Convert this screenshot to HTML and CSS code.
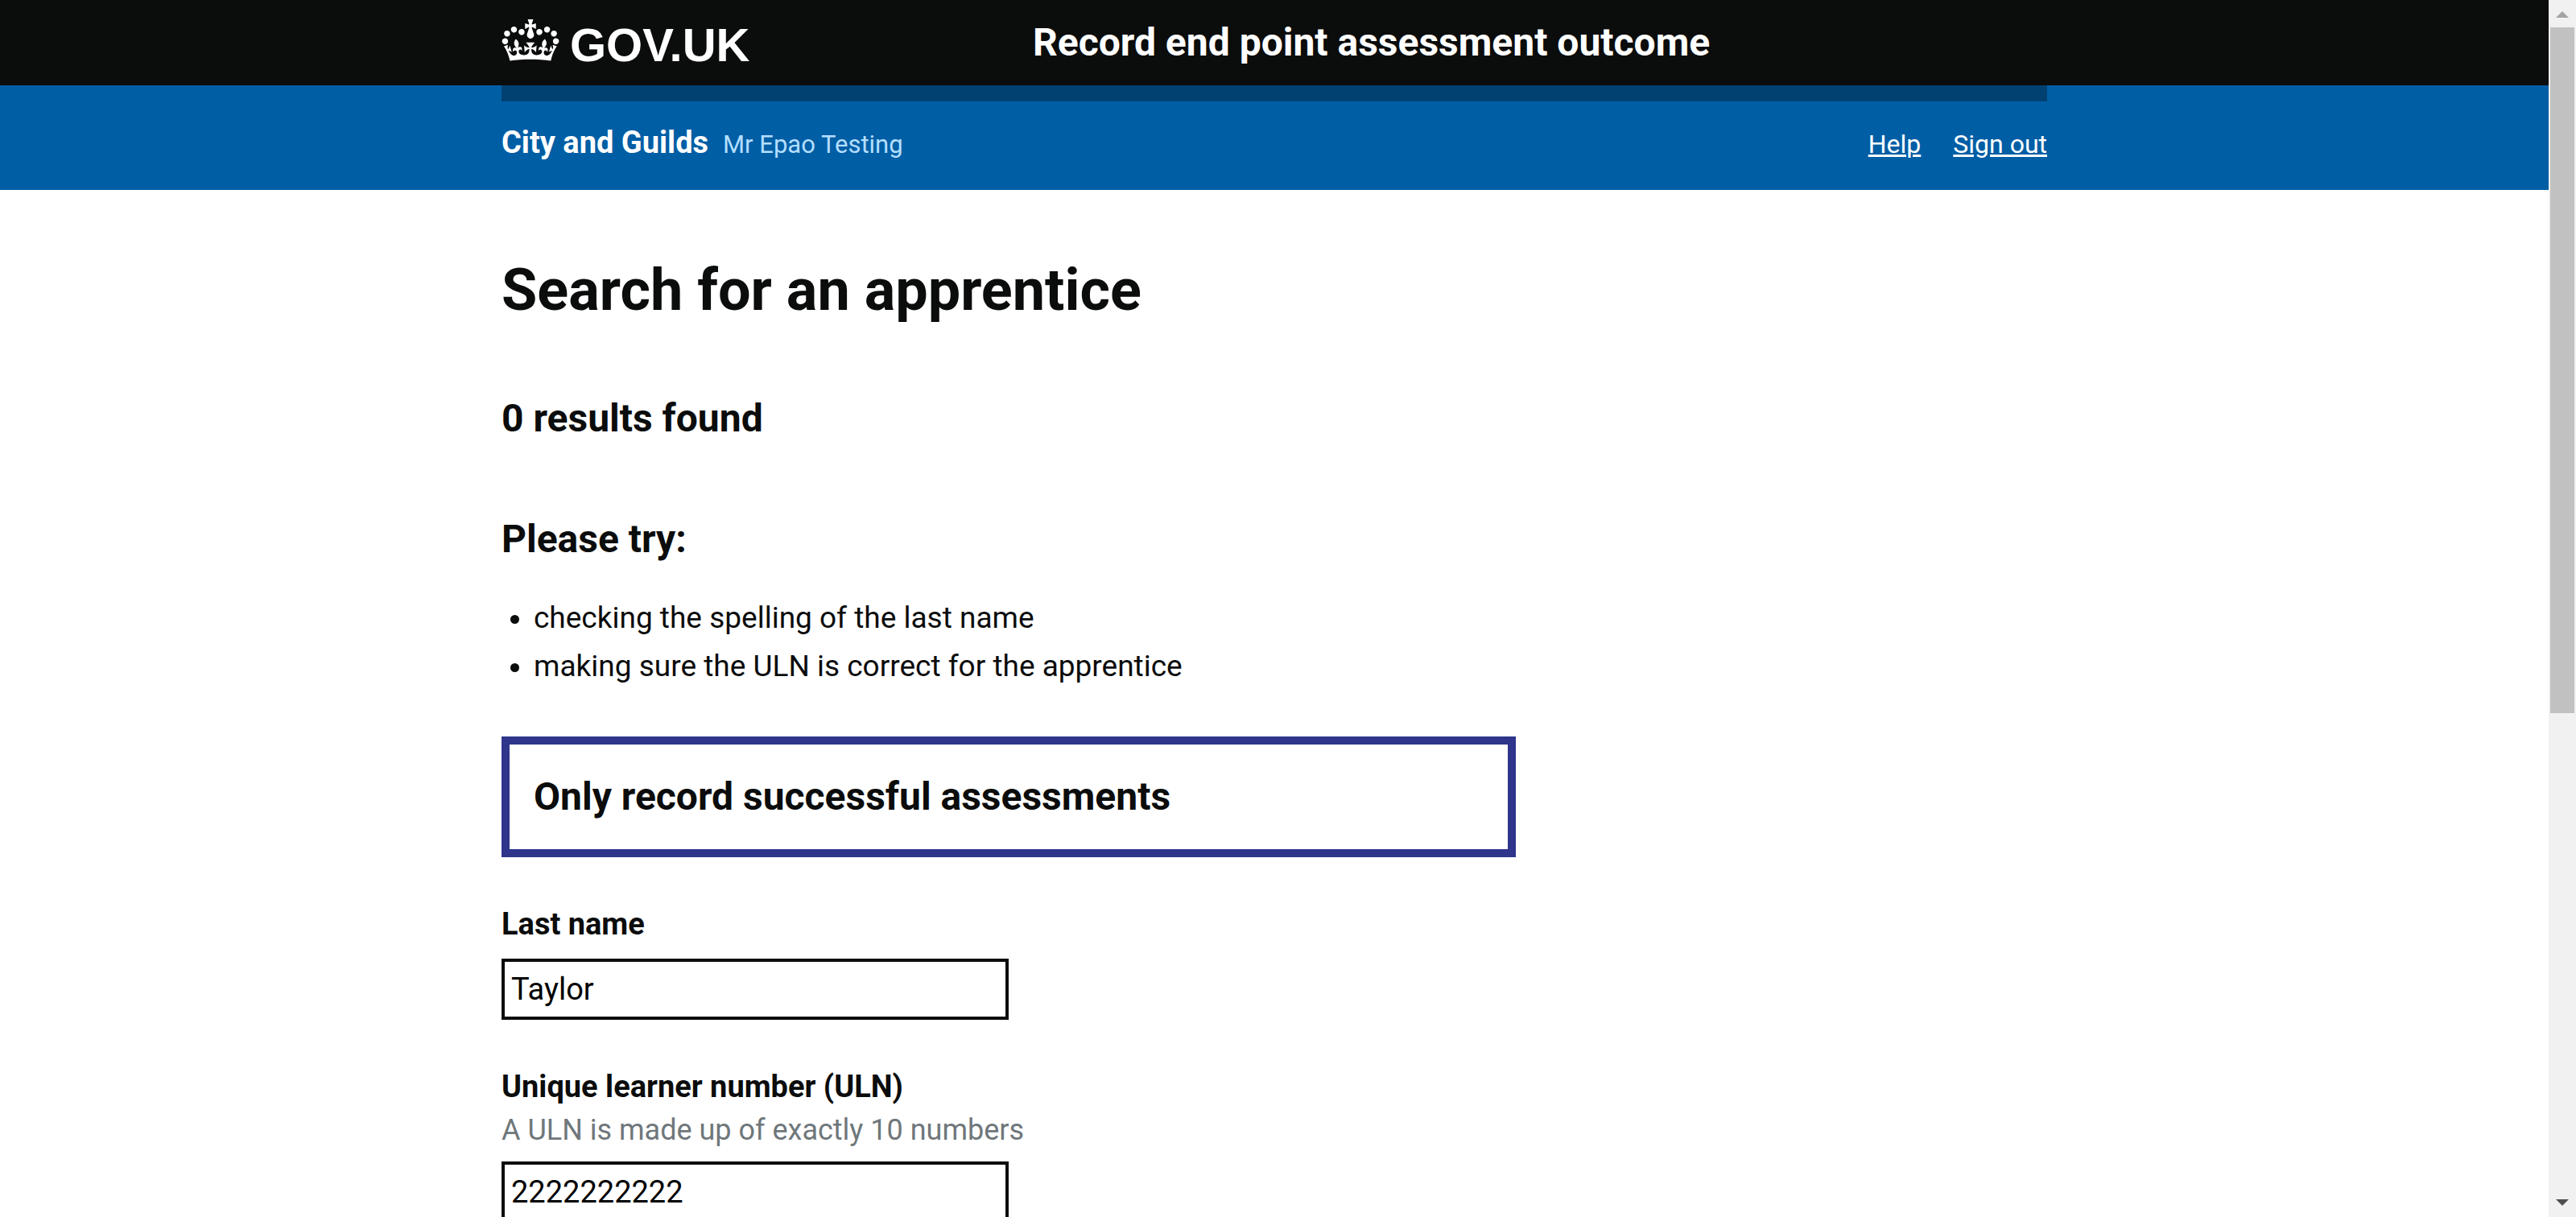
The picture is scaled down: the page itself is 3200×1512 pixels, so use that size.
FILE: index.html
```html
<!DOCTYPE html>
<html lang="en">
<head>
  <meta charset="utf-8">
  <meta name="viewport" content="width=device-width, initial-scale=1">
  <title>Search for an apprentice</title>
  <link rel="stylesheet" href="styles.css">
</head>
<body>
  <div class="window">
    <div class="page">
      <header class="header">
        <div class="container header__row">
          <a class="logo" href="#">
            <svg class="logo__crown" viewBox="0 0 132 97" aria-hidden="true"><path fill="currentColor" fill-rule="evenodd" d="M25 30.2c3.5 1.5 7.7-.2 9.1-3.7 1.5-3.6-.2-7.8-3.9-9.2-3.6-1.4-7.6.3-9.1 3.9-1.4 3.5.3 7.5 3.9 9zM9 39.5c3.6 1.5 7.8-.2 9.2-3.7 1.5-3.6-.2-7.8-3.9-9.1-3.6-1.5-7.6.2-9.1 3.8-1.4 3.5.3 7.5 3.8 9zM4.4 57.2c3.5 1.5 7.7-.2 9.1-3.8 1.5-3.6-.2-7.7-3.9-9.1-3.5-1.5-7.6.3-9.1 3.8-1.4 3.5.3 7.6 3.9 9.1zm38.3-21.4c3.5 1.5 7.7-.2 9.1-3.8 1.5-3.6-.2-7.7-3.9-9.1-3.6-1.5-7.6.3-9.1 3.8-1.3 3.6.4 7.7 3.9 9.1zm64.4-5.6c-3.6 1.5-7.8-.2-9.1-3.7-1.5-3.6.2-7.8 3.8-9.2 3.6-1.4 7.7.3 9.2 3.9 1.3 3.5-.4 7.5-3.9 9zm15.9 9.3c-3.6 1.5-7.7-.2-9.1-3.7-1.5-3.6.2-7.8 3.7-9.1 3.6-1.5 7.7.2 9.2 3.8 1.5 3.5-.3 7.5-3.8 9zm4.7 17.7c-3.6 1.5-7.8-.2-9.2-3.8-1.5-3.6.2-7.7 3.9-9.1 3.6-1.5 7.7.3 9.2 3.8 1.3 3.5-.4 7.6-3.9 9.1zM89.3 35.8c-3.6 1.5-7.8-.2-9.2-3.8-1.4-3.6.2-7.7 3.9-9.1 3.6-1.5 7.7.3 9.2 3.8 1.4 3.6-.3 7.7-3.9 9.1zM69.7 17.7l8.9 4.7V9.3l-8.9 2.8c-.2-.3-.5-.6-.9-.9L72.4 0H59.6l3.5 11.2c-.3.3-.6.5-.9.9l-8.8-2.8v13.1l8.8-4.7c.3.3.6.7.9.9l-5 15.4v.1c-.2.8-.4 1.6-.4 2.4 0 4.1 3.1 7.5 7 8.1h.2c.3 0 .7.1 1 .1.4 0 .7 0 1-.1h.2c4-.6 7.1-4.1 7.1-8.1 0-.8-.1-1.7-.4-2.4V34l-5.1-15.4c.4-.2.7-.6 1-.9zM66 92.8c16.9 0 32.8 1.1 47.1 3.2 4-16.9 8.9-26.7 14-33.5l-9.6-3.4c1 4.9 1.1 7.2 0 10.2-1.5-1.4-3-4.3-4.2-8.7L108.6 76c2.8-2 5-3.2 7.5-3.3-4.4 9.4-10 11.9-13.6 11.2-4.3-.8-6.3-4.6-5.6-7.9 1-4.7 5.7-5.9 8-.5 4.3-8.7-3-11.4-7.6-8.8 7.1-7.2 7.9-13.5 2.1-21.1-8 6.1-8.1 12.3-4.5 20.8-4.7-5.4-12.1-2.5-9.5 6.2 3.4-5.2 7.9-2 7.2 3.1-.6 4.3-6.4 7.8-13.5 7.2-10.3-.9-10.9-8-11.2-13.8 2.5-.5 7.1 1.8 11 7.3L80.2 60c-4.1 4.4-8 5.3-12.3 5.4 1.4-4.4 8-11.6 8-11.6H55.5s6.4 7.2 7.9 11.6c-4.2-.1-8-1-12.3-5.4l1.4 16.4c3.9-5.5 8.5-7.7 10.9-7.3-.3 5.8-.9 12.8-11.1 13.8-7.2.6-12.9-2.9-13.5-7.2-.7-5 3.8-8.3 7.1-3.1 2.7-8.7-4.6-11.6-9.4-6.2 3.7-8.5 3.6-14.7-4.6-20.8-5.8 7.6-5 13.9 2.2 21.1-4.7-2.6-11.9.1-7.7 8.8 2.3-5.5 7.1-4.2 8.1.5.7 3.3-1.3 7.1-5.7 7.9-3.5.7-9-1.8-13.5-11.2 2.5.1 4.7 1.3 7.5 3.3l-4.7-15.4c-1.2 4.4-2.7 7.2-4.3 8.7-1.1-3-.9-5.3 0-10.2l-9.5 3.4c5 6.9 9.9 16.7 14 33.5 14.8-2.1 30.8-3.2 47.7-3.2z"/></svg>
            <span class="logo__text">GOV.UK</span>
          </a>
          <a class="header__service" href="#">Record end point assessment outcome</a>
        </div>
      </header>

      <div class="account">
        <div class="container account__row">
          <p class="account__user">
            <span class="account__org">City and Guilds</span>
            <span class="account__name">Mr Epao Testing</span>
          </p>
          <nav class="account__links" aria-label="Account">
            <a class="account__link" href="#">Help</a>
            <a class="account__link" href="#">Sign out</a>
          </nav>
        </div>
      </div>

      <main class="container main">
        <h1 class="title">Search for an apprentice</h1>
        <h2 class="heading heading--results">0 results found</h2>
        <h2 class="heading heading--try">Please try:</h2>
        <ul class="tips">
          <li>checking the spelling of the last name</li>
          <li>making sure the ULN is correct for the apprentice</li>
        </ul>

        <div class="column">
          <section class="notice">
            <h2 class="heading">Only record successful assessments</h2>
          </section>
          <form class="form">
            <div class="field">
              <label class="field__label" for="last-name">Last name</label>
              <input class="field__input" id="last-name" type="text" value="Taylor">
            </div>
            <div class="field">
              <label class="field__label" for="uln">Unique learner number (ULN)</label>
              <span class="field__hint" id="uln-hint">A ULN is made up of exactly 10 numbers</span>
              <input class="field__input" id="uln" type="text" inputmode="numeric" value="2222222222" aria-describedby="uln-hint">
            </div>
          </form>
        </div>
      </main>
    </div>

    <div class="scrollbar" aria-hidden="true">
      <svg class="scrollbar__arrow" viewBox="0 0 16 8"><path fill="#a3a3a3" d="M0 8 8 0l8 8z"/></svg>
      <div class="scrollbar__track"><div class="scrollbar__thumb"></div></div>
      <svg class="scrollbar__arrow" viewBox="0 0 16 8"><path fill="#505050" d="M0 0h16L8 8z"/></svg>
    </div>
  </div>
</body>
</html>
```
FILE: styles.css
```css
* {
  box-sizing: border-box;
}

body,
h1,
h2,
p,
ul {
  margin: 0;
}

body {
  font-family: Roboto, "Liberation Sans", sans-serif;
  font-size: 37px;
  line-height: 50px;
  color: #0b0c0c;
  background: #fff;
}

.window {
  display: grid;
  grid-template-columns: minmax(0, 1fr) 34px;
  height: 100vh;
}

.page {
  overflow: hidden;
}

.container {
  width: calc(100% - 60px);
  max-width: 1920px;
  margin: 0 auto;
}

/* Black header */

.header {
  background: #0b0c0c;
}

.header__row {
  display: grid;
  grid-template-columns: 1fr 2fr;
  column-gap: 30px;
  align-items: center;
  min-height: 106px;
}

.logo {
  display: flex;
  align-items: baseline;
  gap: 13px;
  padding-top: 3px;
  color: #fff;
  text-decoration: none;
}

.logo__crown {
  width: 72px;
  height: 52px;
}

.logo__text {
  font-family: "Liberation Sans", Arial, sans-serif;
  font-size: 58px;
  font-weight: 700;
  line-height: 60px;
}

.header__service {
  font-size: 48px;
  font-weight: 700;
  line-height: 60px;
  color: #fff;
  text-decoration: none;
}

/* Blue account bar */

.account {
  background: #005ea5;
}

.account__row {
  display: flex;
  justify-content: space-between;
  align-items: center;
  height: 130px;
  padding-bottom: 5px;
  border-top: 20px solid #004172;
}

.account__user {
  display: flex;
  align-items: baseline;
  gap: 18px;
}

.account__org {
  font-size: 38px;
  font-weight: 700;
  color: #fff;
}

.account__name {
  font-size: 31px;
  color: #b3deff;
}

.account__links {
  display: flex;
  gap: 40px;
  font-size: 32px;
}

.account__link {
  color: #fff;
  text-decoration-thickness: 3px;
}

/* Content */

.main {
  padding: 80px 0 60px;
}

.title {
  margin-bottom: 84px;
  font-size: 72px;
  line-height: 90px;
}

.heading {
  font-size: 48px;
  line-height: 60px;
}

.heading--results {
  margin-bottom: 90px;
}

.heading--try {
  margin-bottom: 38px;
}

.tips {
  margin-bottom: 57px;
  padding-left: 40px;
  line-height: 60px;
}

.column {
  max-width: 1260px;
}

.notice {
  margin-bottom: 58px;
  padding: 35px 30px;
  border: 10px solid #2e358b;
}

.form {
  display: grid;
  gap: 58px;
}

.field {
  display: flex;
  flex-direction: column;
  align-items: flex-start;
}

.field__label {
  font-size: 38px;
  font-weight: 700;
}

.field__hint {
  margin: 4px 0 -4px;
  font-size: 36px;
  color: #6f777b;
}

.field__input {
  width: 50%;
  height: 76px;
  margin-top: 18px;
  padding: 8px;
  border: 4px solid #0b0c0c;
  border-radius: 0;
  font-family: inherit;
  font-size: 38px;
  color: #000;
  background: #fff;
}

/* Scrollbar */

.scrollbar {
  display: flex;
  flex-direction: column;
  align-items: center;
  gap: 12px;
  padding: 14px 2px;
  background: #f1f1f1;
}

.scrollbar__arrow {
  flex: none;
  width: 16px;
  height: 8px;
}

.scrollbar__track {
  flex: 1;
  width: 100%;
}

.scrollbar__thumb {
  height: 59%;
  background: #c1c1c1;
}
```
